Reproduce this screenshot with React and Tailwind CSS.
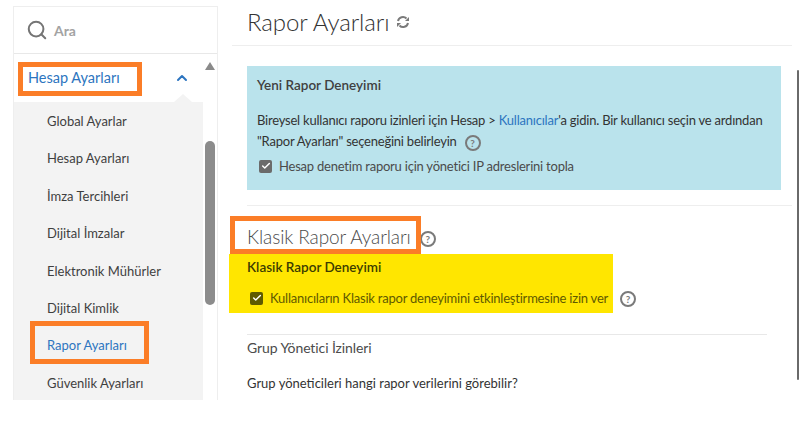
import React from "react";
import { Search, ChevronUp, Check } from "lucide-react";

const menuItems = [
  "Global Ayarlar",
  "Hesap Ayarları",
  "İmza Tercihleri",
  "Dijital İmzalar",
  "Elektronik Mühürler",
  "Dijital Kimlik",
  "Rapor Ayarları",
  "Güvenlik Ayarları",
];

const Help = ({ className = "" }) => (
  <span
    className={`inline-flex items-center justify-center w-[16px] h-[16px] rounded-full border-2 border-[#7a7a7a] text-[#7a7a7a] text-[10px] font-bold leading-none ${className}`}
  >
    ?
  </span>
);

const Checkbox = ({ tone }) => (
  <span className={`flex items-center justify-center w-[13px] h-[13px] rounded-[2px] shrink-0 ${tone}`}>
    <Check className="w-[10px] h-[10px] text-white" strokeWidth={3.5} />
  </span>
);

const Annotation = ({ className }) => (
  <div className={`absolute border-[5px] border-[#fb7d27] pointer-events-none ${className}`} />
);

const App = () => {
  return (
    <div
      className="relative w-[800px] h-[427px] bg-white overflow-hidden"
      style={{ fontFamily: '"Lato", "Open Sans", sans-serif' }}
    >
      <div className="flex h-[400px] overflow-hidden">
        {/* Sidebar */}
        <div className="w-[232px] shrink-0 pl-[13px] pr-[14px] pt-[6px]">
          <div className="h-[394px] border-x border-t border-[#eeeeee] flex flex-col">
            <div className="h-[47px] shrink-0 flex items-center pl-[12px] border-b border-[#e8e8e8]">
              <Search className="w-[22px] h-[22px] text-[#757575]" strokeWidth={2.2} />
              <span className="ml-[6px] text-[14px] font-bold text-[#a3a3a3]">Ara</span>
            </div>
            <div className="flex flex-1 min-h-0">
              <div className="w-[189px] shrink-0 flex flex-col">
                <div className="relative h-[48px] shrink-0 bg-white flex items-center justify-between pl-[14px] pr-[13px]">
                  <span className="text-[14.5px] text-[#2d75c0] pb-[1px]">Hesap Ayarları</span>
                  <ChevronUp className="w-[16px] h-[16px] text-[#2d75c0]" strokeWidth={3} />
                  <span className="absolute right-[11px] bottom-0 border-x-[9px] border-x-transparent border-b-[8px] border-b-[#f3f3f3]" />
                </div>
                <div className="flex-1 bg-[#f3f3f3] pl-[33px] pt-[1px]">
                  {menuItems.map((item, i) => (
                    <div
                      key={item + i}
                      className={`h-[37.4px] flex items-center text-[13px] ${
                        i === 6 ? "text-[#2d75c0]" : "text-[#3f3f3f]"
                      }`}
                    >
                      {item}
                    </div>
                  ))}
                </div>
              </div>
              <div className="flex-1 flex flex-col items-center pt-[8px]">
                <span className="border-x-[5.5px] border-x-transparent border-b-[8px] border-b-[#8a8a8a]" />
                <div className="w-[10px] h-[164px] mt-[71px] rounded-[5px] bg-[#8c8c8c]" />
              </div>
            </div>
          </div>
        </div>

        {/* Main */}
        <div className="flex-1 min-w-0 flex flex-col">
          <div className="h-[46px] shrink-0 mr-[5px] border-b border-[#eeeeee] pl-[15px] pt-[5px] flex items-start">
            <h1 className="text-[24px] leading-[34px] font-light tracking-[-0.1px] text-[#333333]">Rapor Ayarları</h1>
            <svg
              viewBox="0 0 14 14"
              className="w-[14px] h-[14px] ml-[7px] mt-[10px] text-[#7a7a7a]"
              fill="none"
              stroke="currentColor"
              strokeWidth="2"
            >
              <path d="M2 6 A5 5 0 0 1 10.5 3.5" />
              <path d="M12 8 A5 5 0 0 1 3.5 10.5" />
              <path d="M9 6 L13 6 L13 2 Z" fill="currentColor" stroke="none" />
              <path d="M5 8 L1 8 L1 12 Z" fill="currentColor" stroke="none" />
            </svg>
          </div>

          <div className="ml-[15px] mr-[16px] mt-[20px] h-[124px] shrink-0 bg-[#bae3ec] px-[10px] pt-[10px]">
            <h2 className="text-[13.5px] leading-[18px] font-semibold text-[#404040]">Yeni Rapor Deneyimi</h2>
            <p className="mt-[16px] text-[13px] leading-[21px] tracking-[-0.22px] whitespace-nowrap text-[#333333]">
              Bireysel kullanıcı raporu izinleri için Hesap &gt;{" "}
              <span className="text-[#2d75c0]">Kullanıcılar</span>'a gidin. Bir kullanıcı seçin ve ardından
              <br />
              "Rapor Ayarları" seçeneğini belirleyin
              <Help className="ml-[8px] align-[-1px] tracking-normal" />
            </p>
            <div className="flex items-center mt-[5px] ml-[2px]">
              <Checkbox tone="bg-[#6b6b6b]" />
              <span className="ml-[7px] text-[13px] leading-[18px] tracking-[-0.22px] text-[#4b4b4b]">
                Hesap denetim raporu için yönetici IP adreslerini topla
              </span>
            </div>
          </div>

          <div className="ml-[15px] mr-[5px] mt-[15px] border-t border-[#eeeeee] shrink-0" />

          <div className="ml-[15px] mt-[16px] flex items-center h-[30px] shrink-0">
            <h2 className="text-[19px] font-light tracking-[-0.1px] text-[#4b4b4b]">Klasik Rapor Ayarları</h2>
            <Help className="ml-[9px] mt-[3px]" />
          </div>

          {/* Highlighted block */}
          <div className="flex items-end shrink-0 mt-[2px] -ml-[3px]">
            <div className="w-[384px] h-[59px] bg-[#ffe600] pl-[18px] pt-[4px]">
              <h3 className="text-[13.5px] leading-[18px] font-semibold text-[#3c3c00]">Klasik Rapor Deneyimi</h3>
              <div className="flex items-center mt-[13px] ml-[3px]">
                <Checkbox tone="bg-[#5f5a00]" />
                <span className="ml-[7px] text-[13px] leading-[18px] tracking-[-0.22px] whitespace-nowrap text-[#5f5a00]">
                  Kullanıcıların Klasik rapor deneyimini etkinleştirmesine izin ver
                </span>
              </div>
            </div>
            <Help className="ml-[7px] mb-[6px]" />
          </div>

          <div className="ml-[15px] mr-[30px] mt-[21px] border-t border-[#e8e8e8] shrink-0" />
          <h3 className="ml-[15px] mt-[3px] text-[14px] leading-[20px] tracking-[-0.1px] text-[#4b4b4b]">Grup Yönetici İzinleri</h3>
          <p className="ml-[15px] mt-[15px] text-[13px] leading-[20px] text-[#333333]">
            Grup yöneticileri hangi rapor verilerini görebilir?
          </p>
        </div>

        {/* Right scrollbar edge */}
        <div className="w-[3px] shrink-0 pt-[70px] pr-[1px]">
          <div className="w-[2px] h-[310px] rounded-full bg-[#6a6a6a]" />
        </div>
      </div>

      {/* Orange callouts */}
      <Annotation className="left-[18px] top-[62px] w-[124px] h-[34px]" />
      <Annotation className="left-[30px] top-[321px] w-[119px] h-[43px]" />
      <Annotation className="left-[230px] top-[216px] w-[191px] h-[38px]" />
    </div>
  );
};

export default App;
